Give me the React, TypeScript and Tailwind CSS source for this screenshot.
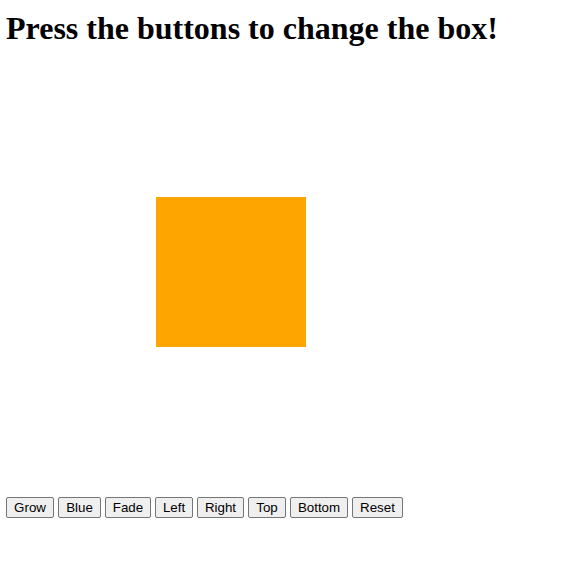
import React from 'react';

const App = () => {
  const buttons = [
    { label: "Grow", w: "w-[48px]" },
    { label: "Blue", w: "w-[43px]" },
    { label: "Fade", w: "w-[46px]" },
    { label: "Left", w: "w-[38px]" },
    { label: "Right", w: "w-[47px]" },
    { label: "Top", w: "w-[38px]" },
    { label: "Bottom", w: "w-[58px]" },
    { label: "Reset", w: "w-[51px]" },
  ];

  return (
    <div className="min-h-[574px] bg-white px-[6px] pt-[10px] text-black">
      <h1 className="h-[37px] text-[32px] font-bold leading-[37px] font-['Liberation_Serif',serif]">
        Press the buttons to change the box!
      </h1>

      <div className="mt-[150px] ml-[150px] h-[150px] w-[150px] bg-[orange]" />

      <div className="mt-[150px] flex gap-[4px]">
        {buttons.map((b) => (
          <button
            key={b.label}
            className={`${b.w} h-[21px] rounded-[2px] border border-[#767676] bg-[#efefef] text-center text-[13.33px] leading-[15px] text-black font-['Liberation_Sans',Arial,sans-serif]`}
          >
            {b.label}
          </button>
        ))}
      </div>
    </div>
  );
};

export default App;
